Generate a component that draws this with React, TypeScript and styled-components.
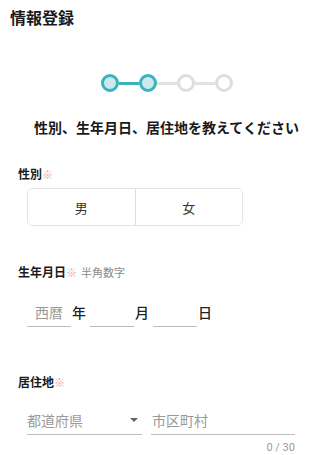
import React, { useState } from 'react';
import styled, { createGlobalStyle } from 'styled-components';

const GlobalStyle = createGlobalStyle`
  html, body {
    margin: 0;
    padding: 0;
    background: #fff;
  }
  body {
    font-family: "Noto Sans CJK JP", "Noto Sans", sans-serif;
    color: #222;
  }
  * {
    box-sizing: border-box;
  }
`;

const Page = styled.div`
  width: 333px;
  min-height: 455px;
  background: #fff;
`;

const Header = styled.div`
  height: 34px;
  padding-left: 10px;
  display: flex;
  align-items: center;
  font-size: 16px;
  font-weight: 700;
  color: #1a1a1a;
`;

const Stepper = styled.div`
  margin-top: 40px;
  display: flex;
  justify-content: center;
  align-items: center;
`;

const Dot = styled.div<{ $active: boolean }>`
  width: 18px;
  height: 18px;
  border-radius: 50%;
  border: 3px solid ${(p) => (p.$active ? '#39b3bf' : '#dedede')};
  background: ${(p) => (p.$active ? '#cfe8ee' : '#fff')};
`;

const Connector = styled.div<{ $active: boolean }>`
  width: 20px;
  height: 3px;
  background: ${(p) => (p.$active ? '#39b3bf' : '#e2e2e2')};
`;

const Subtitle = styled.div`
  margin-top: 25px;
  text-align: center;
  font-size: 14px;
  line-height: 20px;
  font-weight: 700;
  color: #1a1a1a;
`;

const Label = styled.div<{ $gap: number }>`
  margin-top: ${(p) => p.$gap}px;
  padding-left: 18px;
  font-size: 12px;
  line-height: 16px;
  font-weight: 700;
  color: #1a1a1a;
  display: flex;
  align-items: center;
`;

const Required = styled.span`
  color: #eaa3a3;
  font-size: 11px;
  font-weight: 400;
`;

const Hint = styled.span`
  margin-left: 4px;
  color: #8a8a8a;
  font-size: 11px;
  font-weight: 400;
`;

const Segment = styled.div`
  margin: 6px 0 0 27px;
  width: 216px;
  height: 38px;
  display: flex;
  border: 1px solid #e3e3e3;
  border-radius: 6px;
  overflow: hidden;
`;

const SegmentButton = styled.button<{ $selected: boolean }>`
  flex: 1;
  border: none;
  background: ${(p) => (p.$selected ? '#eaf6f8' : '#fff')};
  font-family: inherit;
  font-size: 13px;
  color: #333;
  cursor: pointer;
  & + & {
    border-left: 1px solid #dcdcdc;
  }
`;

const DateRow = styled.div`
  margin: 19px 0 0 27px;
  display: flex;
  align-items: center;
`;

const DateInput = styled.input`
  width: 44px;
  height: 28px;
  border: none;
  border-bottom: 1px solid #bdbdbd;
  padding: 0 0 2px 8px;
  font-family: inherit;
  font-size: 14px;
  color: #333;
  outline: none;
  &::placeholder {
    color: #9a9a9a;
  }
`;

const Suffix = styled.span`
  width: 12px;
  margin: 0 6px 0 1px;
  font-size: 14px;
  font-weight: 500;
  color: #222;
  padding-bottom: 2px;
`;

const AddressRow = styled.div`
  margin: 17px 0 0 27px;
  display: flex;
  gap: 9px;
`;

const SelectBox = styled.div`
  width: 115px;
  height: 28px;
  border-bottom: 1px solid #bdbdbd;
  display: flex;
  align-items: center;
  justify-content: space-between;
  padding: 0 4px 2px 0;
  font-size: 14px;
  color: #9a9a9a;
`;

const Caret = styled.span`
  width: 0;
  height: 0;
  border-left: 4px solid transparent;
  border-right: 4px solid transparent;
  border-top: 4px solid #666;
`;

const CityInput = styled.input`
  width: 144px;
  height: 28px;
  border: none;
  border-bottom: 1px solid #bdbdbd;
  padding: 0 0 2px 1px;
  font-family: inherit;
  font-size: 14px;
  color: #333;
  outline: none;
  &::placeholder {
    color: #9a9a9a;
  }
`;

const Counter = styled.div`
  width: 295px;
  margin-top: 6px;
  text-align: right;
  font-size: 11px;
  line-height: 14px;
  color: #9a9a9a;
  font-family: "Roboto", "Noto Sans", sans-serif;
`;

export default function App() {
  const [gender, setGender] = useState<string | null>(null);
  const [city, setCity] = useState('');
  const steps = [true, true, false, false];

  return (
    <Page>
      <GlobalStyle />
      <Header>情報登録</Header>

      <Stepper>
        {steps.map((active, i) => (
          <React.Fragment key={i}>
            {i > 0 && <Connector $active={active} />}
            <Dot $active={active} />
          </React.Fragment>
        ))}
      </Stepper>

      <Subtitle>性別、生年月日、居住地を教えてください</Subtitle>

      <Label $gap={29}>
        性別<Required>※</Required>
      </Label>
      <Segment>
        {['男', '女'].map((g) => (
          <SegmentButton key={g} $selected={gender === g} onClick={() => setGender(g)}>
            {g}
          </SegmentButton>
        ))}
      </Segment>

      <Label $gap={38}>
        生年月日<Required>※</Required>
        <Hint>半角数字</Hint>
      </Label>
      <DateRow>
        <DateInput placeholder="西暦" />
        <Suffix>年</Suffix>
        <DateInput />
        <Suffix>月</Suffix>
        <DateInput />
        <Suffix>日</Suffix>
      </DateRow>

      <Label $gap={47}>
        居住地<Required>※</Required>
      </Label>
      <AddressRow>
        <SelectBox>
          都道府県
          <Caret />
        </SelectBox>
        <CityInput
          placeholder="市区町村"
          maxLength={30}
          value={city}
          onChange={(e: React.ChangeEvent<HTMLInputElement>) => setCity(e.target.value)}
        />
      </AddressRow>
      <Counter>{city.length} / 30</Counter>
    </Page>
  );
}
